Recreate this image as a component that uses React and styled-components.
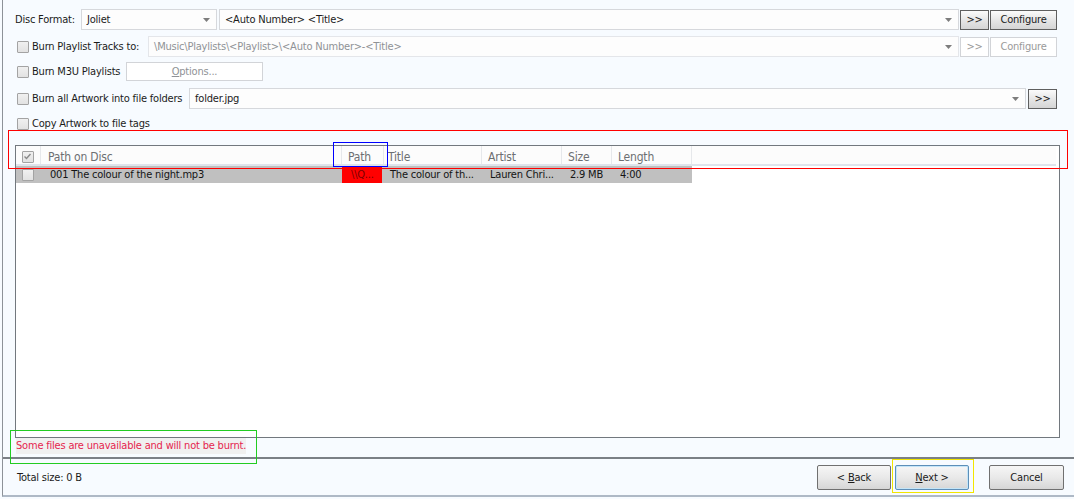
import React from "react";
import styled, { createGlobalStyle, css } from "styled-components";

const GlobalStyle = createGlobalStyle`
  html, body {
    margin: 0;
    padding: 0;
    background: #f7fbff;
  }
  body {
    font-family: "DejaVu Sans Condensed", "DejaVu Sans", sans-serif;
    font-size: 11px;
    letter-spacing: -0.2px;
    color: #1b1b1b;
  }
  * { box-sizing: border-box; }
`;

const columns = [
  { key: "disc", title: "Path on Disc", width: 301, pad: 7 },
  { key: "path", title: "Path", width: 42, pad: 6 },
  { key: "title", title: "Title", width: 98, pad: 4 },
  { key: "artist", title: "Artist", width: 80, pad: 6 },
  { key: "size", title: "Size", width: 50, pad: 6 },
  { key: "length", title: "Length", width: 80, pad: 6 },
];

const rows = [
  {
    disc: "001 The colour of the night.mp3",
    path: "\\\\Q...",
    title: "The colour of th...",
    artist: "Lauren Chri...",
    size: "2.9 MB",
    length: "4:00",
    missing: true,
  },
];

function Arrow() {
  return (
    <svg width="7" height="4" viewBox="0 0 7 4">
      <path d="M0 0 H7 L3.5 4 Z" fill="#7d7d7d" />
    </svg>
  );
}

function Combo({ value, width, disabled, gap }) {
  return (
    <ComboBox $width={width} $disabled={disabled} $gap={gap}>
      <span>{value}</span>
      <Arrow />
    </ComboBox>
  );
}

function Check({ checked }) {
  return (
    <CheckBox>
      {checked && (
        <svg width="9" height="9" viewBox="0 0 9 9">
          <path d="M1.5 4.5 L3.5 6.5 L7.5 2" stroke="#8a8a8a" strokeWidth="1.4" fill="none" />
        </svg>
      )}
    </CheckBox>
  );
}

export default function App() {
  return (
    <>
      <GlobalStyle />
      <Page>
        <Frame>
          <Form>
            <Row $top={9}>
              <Label $width={66}>Disc Format:</Label>
              <Combo value="Joliet" width={136} gap={2} />
              <Combo value="<Auto Number> <Title>" width={740} gap={1} />
              <ToolButton $width={29}>&gt;&gt;</ToolButton>
              <ToolButton $width={67}>Configure</ToolButton>
            </Row>
            <Row $top={6}>
              <Check />
              <Label $width={116}>Burn Playlist Tracks to:</Label>
              <Combo value="\Music\Playlists\<Playlist>\<Auto Number>-<Title>" width={811} gap={1} disabled />
              <ToolButton $width={29} $disabled>&gt;&gt;</ToolButton>
              <ToolButton $width={67} $disabled>Configure</ToolButton>
            </Row>
            <Row $top={4}>
              <Check />
              <Label $width={94}>Burn M3U Playlists</Label>
              <OptionsButton><u>O</u>ptions...</OptionsButton>
            </Row>
            <Row $top={6}>
              <Check />
              <Label $width={157}>Burn all Artwork into file folders</Label>
              <Combo value="folder.jpg" width={837} gap={2} />
              <ToolButton $width={29}>&gt;&gt;</ToolButton>
            </Row>
            <Row $top={6} $height={17}>
              <Check />
              <Label>Copy Artwork to file tags</Label>
            </Row>
          </Form>

          <ListView>
            <HeaderRow>
              <HeadCell $width={25} $center>
                <Check checked />
              </HeadCell>
              {columns.map((c) => (
                <HeadCell key={c.key} $width={c.width} $pad={c.pad}>
                  {c.title}
                </HeadCell>
              ))}
              <HeadFiller />
            </HeaderRow>
            {rows.map((r, i) => (
              <DataRow key={i}>
                <Cell $width={25} $center>
                  <Check />
                </Cell>
                {columns.map((c) => (
                  <Cell
                    key={c.key}
                    $width={c.width}
                    $pad={c.pad + 2}
                    $missing={c.key === "path" && r.missing}
                  >
                    {r[c.key]}
                  </Cell>
                ))}
              </DataRow>
            ))}
          </ListView>

          <Warning>
            <span>Some files are unavailable and will not be burnt.</span>
          </Warning>

          <Footer>
            <TotalSize>Total size: 0 B</TotalSize>
            <NavButtons>
              <DialogButton>
                &lt; <u>B</u>ack
              </DialogButton>
              <DialogButton $default $gap={4}>
                <u>N</u>ext &gt;
              </DialogButton>
              <DialogButton $gap={20} $width={75}>Cancel</DialogButton>
            </NavButtons>
          </Footer>
        </Frame>

        <Marker $color="#ff0000" style={{ left: 8, top: 130, width: 1060, height: 39 }} />
        <Marker $color="#0000ff" style={{ left: 333, top: 142, width: 55, height: 25 }} />
        <Marker $color="#22cc22" style={{ left: 10, top: 430, width: 247, height: 34 }} />
        <Marker $color="#f2e600" style={{ left: 892, top: 459, width: 82, height: 34 }} />
      </Page>
    </>
  );
}

const Page = styled.div`
  position: relative;
  width: 1074px;
  height: 499px;
  overflow: hidden;
  background: #f7fbff;
`;

const Frame = styled.div`
  margin-left: 2px;
  width: 1072px;
  height: 497px;
  border-left: 1px solid #8d9298;
  border-bottom: 2px solid #aeb9c6;
  display: flex;
  flex-direction: column;
`;

const Form = styled.div`
  display: flex;
  flex-direction: column;
  padding-left: 12px;
`;

const Row = styled.div`
  display: flex;
  align-items: center;
  height: ${(p) => p.$height || 21}px;
  margin-top: ${(p) => p.$top}px;
`;

const Label = styled.span`
  white-space: nowrap;
  ${(p) => p.$width && css`width: ${p.$width}px;`}
  flex-shrink: 0;
`;

const CheckBox = styled.span`
  display: inline-flex;
  align-items: center;
  justify-content: center;
  width: 12px;
  height: 12px;
  margin: 0 3px 0 2px;
  border: 1px solid #a3a3a3;
  border-radius: 1px;
  background: linear-gradient(#f0f0f0, #e2e2e2);
  flex-shrink: 0;
`;

const ComboBox = styled.div`
  display: flex;
  align-items: center;
  justify-content: space-between;
  width: ${(p) => p.$width}px;
  height: 21px;
  margin-right: ${(p) => p.$gap}px;
  padding: 0 6px 0 5px;
  background: #fdfdfd;
  border: 1px solid ${(p) => (p.$disabled ? "#e4e6ea" : "#d6d8dc")};
  color: ${(p) => (p.$disabled ? "#8f9296" : "#1b1b1b")};
  flex-shrink: 0;
  span {
    white-space: nowrap;
  }
`;

const ToolButton = styled.button`
  width: ${(p) => p.$width}px;
  height: 20px;
  margin-right: 1px;
  padding: 0;
  font: inherit;
  letter-spacing: inherit;
  flex-shrink: 0;
  ${(p) =>
    p.$disabled
      ? css`
          background: #ffffff;
          border: 1px solid #d2d4d8;
          color: #9a9a9a;
        `
      : css`
          background: linear-gradient(#fbfbfb, #e6e6e6 50%, #d5d5d5);
          border: 1px solid #5f5f5f;
          color: #1b1b1b;
        `}
`;

const OptionsButton = styled.button`
  width: 137px;
  height: 19px;
  padding: 0;
  font: inherit;
  letter-spacing: inherit;
  color: #8f9296;
  background: #ffffff;
  border: 1px solid #d2d4d8;
`;

const ListView = styled.div`
  margin: 13px 0 0 12px;
  width: 1045px;
  height: 293px;
  border: 1px solid #72787e;
  background: #ffffff;
  flex-shrink: 0;
`;

const HeaderRow = styled.div`
  display: flex;
  height: 20px;
  background: #fcfcfc;
  border-bottom: 2px solid #dfe5ec;
  margin-right: 3px;
`;

const HeadCell = styled.div`
  width: ${(p) => p.$width}px;
  display: flex;
  align-items: center;
  justify-content: ${(p) => (p.$center ? "center" : "flex-start")};
  padding-left: ${(p) => (p.$center ? 0 : p.$pad)}px;
  padding-top: 3px;
  border-right: 1px solid #e6e8eb;
  color: #6d6f72;
  font-size: 12px;
  flex-shrink: 0;
  white-space: nowrap;
`;

const HeadFiller = styled.div`
  flex: 1;
`;

const DataRow = styled.div`
  display: flex;
  height: 17px;
  width: 676px;
  background: #c0c0c0;
`;

const Cell = styled.div`
  width: ${(p) => p.$width}px;
  display: flex;
  align-items: center;
  justify-content: ${(p) => (p.$center ? "center" : "flex-start")};
  padding-left: ${(p) => (p.$center ? 0 : p.$pad)}px;
  white-space: nowrap;
  overflow: hidden;
  flex-shrink: 0;
  color: #141414;
  ${(p) =>
    p.$missing &&
    css`
      background: #ff0000;
      color: #7a0000;
      width: ${p.$width - 2}px;
      margin-right: 2px;
      padding-left: 9px;
    `}
`;

const Warning = styled.div`
  height: 19px;
  padding-left: 13px;
  display: flex;
  align-items: flex-start;
  span {
    background: #f0f0f0;
    color: #e51f4e;
    line-height: 16px;
  }
`;

const Footer = styled.div`
  flex: 1;
  border-top: 2px solid #7b8086;
  display: flex;
  align-items: center;
  justify-content: space-between;
  padding: 0 10px 0 14px;
`;

const TotalSize = styled.span`
  color: #1b1b1b;
`;

const NavButtons = styled.div`
  display: flex;
  align-items: center;
`;

const DialogButton = styled.button`
  width: ${(p) => p.$width || 74}px;
  height: 25px;
  margin-left: ${(p) => p.$gap || 0}px;
  padding: 0;
  font: inherit;
  letter-spacing: inherit;
  color: #1b1b1b;
  background: linear-gradient(#f6f6f6, #e9e9e9 50%, #d6d6d6);
  border: 1px solid #707070;
  border-radius: 2px;
  ${(p) =>
    p.$default &&
    css`
      box-shadow: inset 0 0 0 1px #c4e5f8;
      border-color: #5d8fb8;
    `}
`;

const Marker = styled.div`
  position: absolute;
  border: 1px solid ${(p) => p.$color};
  pointer-events: none;
`;
